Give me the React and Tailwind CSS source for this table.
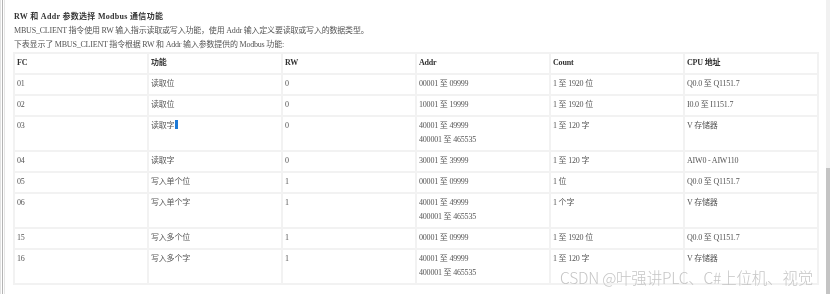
import React from "react";

const rows = [
  { fc: "01", fn: "读取位", rw: "0", addr: ["00001 至 09999"], count: "1 至 1920 位", cpu: "Q0.0 至 Q1151.7" },
  { fc: "02", fn: "读取位", rw: "0", addr: ["10001 至 19999"], count: "1 至 1920 位", cpu: "I0.0 至 I1151.7" },
  { fc: "03", fn: "读取字", rw: "0", addr: ["40001 至 49999", "400001 至 465535"], count: "1 至 120 字", cpu: "V 存储器", cursor: true },
  { fc: "04", fn: "读取字", rw: "0", addr: ["30001 至 39999"], count: "1 至 120 字", cpu: "AIW0 - AIW110" },
  { fc: "05", fn: "写入单个位", rw: "1", addr: ["00001 至 09999"], count: "1 位", cpu: "Q0.0 至 Q1151.7" },
  { fc: "06", fn: "写入单个字", rw: "1", addr: ["40001 至 49999", "400001 至 465535"], count: "1 个字", cpu: "V 存储器" },
  { fc: "15", fn: "写入多个位", rw: "1", addr: ["00001 至 09999"], count: "1 至 1920 位", cpu: "Q0.0 至 Q1151.7" },
  { fc: "16", fn: "写入多个字", rw: "1", addr: ["40001 至 49999", "400001 至 465535"], count: "1 至 120 字", cpu: "V 存储器" },
];

const head = ["FC", "功能", "RW", "Addr", "Count", "CPU 地址"];

const cell = "bg-white align-top pl-[2px] pt-[2px] pb-[3px] w-[132px]";

export default function App() {
  return (
    <div
      className="relative flex h-[294px] w-[830px] overflow-hidden bg-white text-[8px] leading-[14px] tracking-[-0.2px] text-[#555555]"
      style={{ fontFamily: '"Liberation Serif", "Noto Sans CJK SC", serif' }}
    >
      <div className="flex">
        <div className="w-[1px] bg-[#e2e2e2]" />
        <div className="w-[1px] bg-white" />
        <div className="w-[1px] bg-[#b4b4b4]" />
        <div className="w-[1px] bg-white" />
        <div className="w-[1px] bg-[#e6e6e6]" />
      </div>

      <div className="flex-1 pl-[9px] pt-[10px] will-change-transform">
        <p className="font-bold tracking-[0.3px] text-[#333]">RW 和 Addr 参数选择 Modbus 通信功能</p>
        <p>MBUS_CLIENT 指令使用 RW 输入指示读取或写入功能，使用 Addr 输入定义要读取或写入的数据类型。</p>
        <p>下表显示了 MBUS_CLIENT 指令根据 RW 和 Addr 输入参数提供的 Modbus 功能:</p>

        <table className="-ml-[1px] border-separate border-spacing-[2px] bg-[#f2f2f2]">
          <thead>
            <tr>
              {head.map((h) => (
                <th key={h} className={cell + " text-left font-bold text-[#333]"}>
                  {h}
                </th>
              ))}
            </tr>
          </thead>
          <tbody>
            {rows.map((r) => (
              <tr key={r.fc}>
                <td className={cell}>{r.fc}</td>
                <td className={cell}>
                  {r.fn}
                  {r.cursor && <span className="ml-[1px] inline-block h-[9px] w-[3px] translate-y-[1px] bg-[#1e7ad6]" />}
                </td>
                <td className={cell}>{r.rw}</td>
                <td className={cell}>
                  {r.addr.map((a) => (
                    <div key={a}>{a}</div>
                  ))}
                </td>
                <td className={cell}>{r.count}</td>
                <td className={cell}>{r.cpu}</td>
              </tr>
            ))}
          </tbody>
        </table>
      </div>

      <div className="flex w-[4px] flex-col bg-[#f1f1f1]">
        <div className="h-[168px]" />
        <div className="flex-1 bg-[#c4c4c4]" />
      </div>

      <div
        className="pointer-events-none absolute left-[560px] top-[267px] text-[15.5px] leading-[20px] font-light text-[#c6c6c6] will-change-transform"
        style={{ fontFamily: '"Noto Sans CJK SC", "Noto Sans", sans-serif' }}
      >
        CSDN @叶强讲PLC、C#上位机、视觉
      </div>
    </div>
  );
}
